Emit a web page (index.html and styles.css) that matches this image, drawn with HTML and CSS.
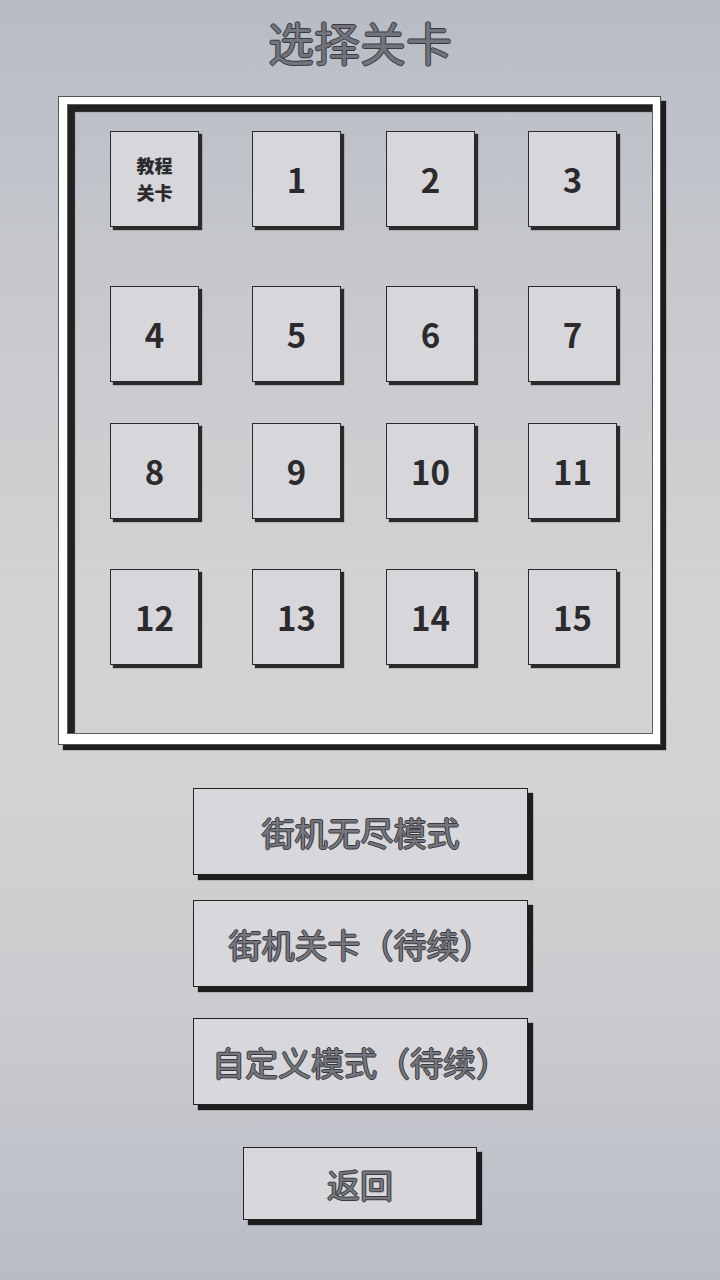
FILE: index.html
```html
<!DOCTYPE html>
<html lang="zh">
<head>
    <meta charset="UTF-8">
    <meta name="viewport" content="width=device-width, initial-scale=1.0">
    <title>选择关卡</title>
    <link rel="stylesheet" href="styles.css">
</head>
<body>
    <div class="screen">
        <h1 class="title">选择关卡</h1>

        <div class="board">
            <div class="board-inner">
                <div class="levels">
                    <button class="tile tile-tutorial"><span class="tile-line">教程</span><span class="tile-line">关卡</span></button>
                    <button class="tile">1</button>
                    <button class="tile">2</button>
                    <button class="tile">3</button>
                    <button class="tile">4</button>
                    <button class="tile">5</button>
                    <button class="tile">6</button>
                    <button class="tile">7</button>
                    <button class="tile">8</button>
                    <button class="tile">9</button>
                    <button class="tile">10</button>
                    <button class="tile">11</button>
                    <button class="tile">12</button>
                    <button class="tile">13</button>
                    <button class="tile">14</button>
                    <button class="tile">15</button>
                </div>
            </div>
        </div>

        <div class="menu">
            <button class="btn btn-endless">街机无尽模式</button>
            <button class="btn btn-arcade">街机关卡（待续）</button>
            <button class="btn btn-custom">自定义模式（待续）</button>
            <button class="btn btn-back">返回</button>
        </div>
    </div>
</body>
</html>
```

FILE: styles.css
```css
html, body {
    margin: 0;
    padding: 0;
}
body {
    font-family: "Noto Sans CJK SC", "Noto Sans", sans-serif;
    background: linear-gradient(to bottom, #b7bcc5 0%, #c6c8cc 22%, #d2d2d3 45%, #d3d3d3 60%, #cbcccf 78%, #b8bcc6 100%);
    min-height: 1280px;
}
.screen {
    width: 720px;
    height: 1280px;
    overflow: hidden;
}
.title {
    margin: 18px 0 0;
    height: 46px;
    font-size: 46px;
    line-height: 46px;
    font-weight: 400;
    text-align: center;
    color: #71747c;
    text-shadow: 1px 0 #3a3a3c, -1px 0 #3a3a3c, 0 1px #3a3a3c, 0 -1px #3a3a3c;
}
.board {
    box-sizing: border-box;
    width: 601px;
    height: 647px;
    margin: 33px 0 0 59px;
    border-style: solid;
    border-color: #fff;
    border-width: 7px 7px 10px 8px;
    box-shadow: 0 0 0 1px #555, 5px 5px 1px 1px #1e1e1e;
}
.board-inner {
    box-sizing: border-box;
    height: 100%;
    border: 1px solid #5e5e5e;
    box-shadow: inset 7px 7px 1px #222;
}
.levels {
    display: grid;
    grid-template-columns: 142px 134px 142px 89px;
    grid-template-rows: 155px 137px 146px 96px;
    padding: 26px 0 0 42px;
}
.tile {
    box-sizing: border-box;
    width: 89px;
    height: 96px;
    padding: 0;
    background: #d7d7db;
    border: 1px solid #2a2a2a;
    box-shadow: 3px 3px 1px #2a2a2a;
    font-family: "Noto Sans CJK SC", sans-serif;
    font-size: 33px;
    font-weight: 700;
    color: #2b2b2d;
    cursor: pointer;
}
.tile-tutorial {
    display: flex;
    flex-direction: column;
    align-items: center;
    justify-content: center;
    font-size: 18px;
    font-weight: 900;
}
.tile-line {
    display: block;
    line-height: 27px;
}
.menu {
    display: flex;
    flex-direction: column;
    align-items: flex-start;
    margin-top: 44px;
}
.btn {
    box-sizing: border-box;
    display: flex;
    align-items: center;
    justify-content: center;
    width: 335px;
    height: 87px;
    margin-left: 193px;
    padding: 0;
    background: #d8d8dc;
    border: 1px solid #222;
    box-shadow: 5px 5px 1px #1e1e1e;
    font-family: "Noto Sans CJK SC", sans-serif;
    font-size: 33px;
    font-weight: 400;
    color: #74777f;
    text-shadow: 1px 0 #3b3b3d, -1px 0 #3b3b3d, 0 1px #3b3b3d, 0 -1px #3b3b3d;
    cursor: pointer;
    white-space: nowrap;
}
.btn-arcade {
    margin-top: 25px;
}
.btn-custom {
    margin-top: 31px;
}
.btn-back {
    width: 234px;
    height: 73px;
    margin-top: 42px;
    margin-left: 243px;
}
```
